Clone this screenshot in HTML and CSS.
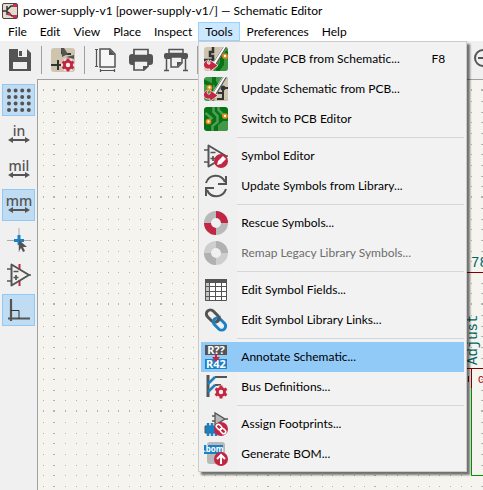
FILE: index.html
```html
<!DOCTYPE html>
<html lang="en">
<head>
<meta charset="utf-8">
<title>power-supply-v1 — Schematic Editor</title>
<link rel="stylesheet" href="styles.css">
</head>
<body>
<svg class="defs" aria-hidden="true">
  <defs>
    <clipPath id="tile"><rect width="24" height="24" rx="3"/></clipPath>
    <symbol id="redarrow" viewBox="0 0 24 24">
      <path d="M22 -2L10 17" stroke="#fff" stroke-width="4"/>
      <path d="M23 -1L12 17" stroke="#545454" stroke-width="1.200"/>
      <path d="M20 -1L9 16" stroke="#888" stroke-width="1"/>
      <path d="M5 13C-3 14 -2 23 6 22v2.500l8-6-8-5.500v4c-3 1-4-2-1-4z" fill="#c22643" stroke="#fff" stroke-width=".7"/>
    </symbol>
    <symbol id="redgear" viewBox="0 0 14 14">
      <circle cx="7" cy="7" r="7" fill="#f3e9e4" opacity=".8"/>
      <g stroke="#c22643" stroke-width="3"><path d="M7 .5v13M1.400 3.800l11.200 6.400M1.400 10.200l11.200-6.400"/></g>
      <circle cx="7" cy="7" r="3.600" fill="#f0eeee" stroke="#c22643" stroke-width="2.800"/>
    </symbol>
    <symbol id="opamp" viewBox="0 0 24 24">
      <path d="M4.500 1.500v21L22 12z" fill="none" stroke="#545454" stroke-width="2" stroke-linejoin="round"/>
      <path d="M0 6h4M0 18h4M22 12h2M6.500 8.500h5M6.500 14.500h5M9 12v5" stroke="#545454" stroke-width="1.700" fill="none"/>
    </symbol>
    <symbol id="ring" viewBox="0 0 24 24">
      <circle cx="12" cy="12" r="8.500" fill="none" stroke="#b9b9b9" stroke-width="7"/>
      <path d="M12 3.500a8.500 8.500 0 0 1 8.500 8.500M12 20.500A8.500 8.500 0 0 1 3.500 12" fill="none" stroke="currentColor" stroke-width="7"/>
    </symbol>
    <symbol id="span" viewBox="0 0 24 6">
      <path d="M5 3h14" stroke="#545454" stroke-width="2"/>
      <path d="M1 3l5-3v6zM23 3l-5-3v6z" fill="#545454"/>
    </symbol>
  </defs>
</svg>

<header class="titlebar">
  <svg class="logo" viewBox="0 0 16 16"><rect x=".5" y=".5" width="15" height="15" rx="1.500" fill="#e4dccb" stroke="#4a4545"/><path d="M5 3v9M0 8h5M5 7l4-4h3M6 9l4 4h4" fill="none" stroke="#333" stroke-width="1.500"/><path d="M9 13l-1-4-3 3zM11 1h4v3h-4zM11 12h4v3h-4z" fill="#d42a55"/></svg>
  <h1>power-supply-v1 [power-supply-v1/] — Schematic Editor</h1>
</header>

<nav class="menubar" aria-label="Main menu">
  <button>File</button>
  <button>Edit</button>
  <button>View</button>
  <button>Place</button>
  <button>Inspect</button>
  <div class="dropdown">
    <button class="open" aria-expanded="true">Tools</button>
    <div class="menu" role="menu">
      <button role="menuitem"><svg viewBox="0 0 24 24"><g clip-path="url(#tile)"><rect width="24" height="24" fill="#cfc5ae"/><path d="M20 0h4v24H9z" fill="#3c9640"/><path d="M9 0v5H6v4h3v4M0 13h11" stroke="#333" stroke-width="2.500" fill="none"/><path d="M24 5l-6 6v6l-5 7" stroke="#087316" stroke-width="4" fill="none"/><use href="#redarrow" width="24" height="24"/><circle cx="21" cy="9" r="2" fill="#fff" stroke="#ee8b18" stroke-width="1.700"/></g></svg><span>Update PCB from Schematic...</span><kbd>F8</kbd></button>
      <button role="menuitem"><svg viewBox="0 0 24 24"><g clip-path="url(#tile)"><rect width="24" height="24" fill="#43984a"/><path d="M-1 4l8 4v8M10 0v5l4 5" stroke="#087316" stroke-width="4" fill="none"/><path d="M22 0h2v24H10z" fill="#cfc5ae"/><path d="M24 11h-5v11h-6M19 16h-5" stroke="#333" stroke-width="2" fill="none"/><circle cx="19" cy="11" r="2.500" fill="#333"/><use href="#redarrow" width="24" height="24"/><circle cx="5.500" cy="10.500" r="2" fill="#fff" stroke="#ee8b18" stroke-width="1.700"/></g></svg><span>Update Schematic from PCB...</span></button>
      <button role="menuitem"><svg viewBox="0 0 24 24"><g clip-path="url(#tile)"><rect width="24" height="24" fill="#087316"/><path d="M14 18l5-4h5v10H14z" fill="#43984a"/><path d="M9.500 0v5l4 4v6l-5 4v5M14.500 0v3l5 5M4.500 14l3-3-6-5" fill="none" stroke="#4da054" stroke-width="2.500"/><circle cx="4.500" cy="14.500" r="2" fill="#fff" stroke="#ee8b18" stroke-width="1.700"/><circle cx="21" cy="9" r="2" fill="#fff" stroke="#ee8b18" stroke-width="1.700"/></g></svg><span>Switch to PCB Editor</span></button>
      <hr>
      <button role="menuitem"><svg viewBox="0 0 24 24"><use href="#opamp" width="24" height="24"/><circle cx="17" cy="17" r="7" fill="#c22643"/><path d="M13 21l1-4 5-5 3 3-5 5z" fill="#fff"/></svg><span>Symbol Editor</span></button>
      <button role="menuitem"><svg viewBox="0 0 24 24"><path d="M2 9C5 0 17-1 21 8M22 15C19 24 7 25 3 16" fill="none" stroke="#545454" stroke-width="2"/><path d="M22 2v8h-8M2 22v-8h8" fill="none" stroke="#545454" stroke-width="2"/></svg><span>Update Symbols from Library...</span></button>
      <hr>
      <button role="menuitem"><svg class="rescue" viewBox="0 0 24 24"><use href="#ring" width="24" height="24"/></svg><span>Rescue Symbols...</span></button>
      <button role="menuitem" disabled><svg class="remap" viewBox="0 0 24 24"><use href="#ring" width="24" height="24"/></svg><span>Remap Legacy Library Symbols...</span></button>
      <hr>
      <button role="menuitem"><svg viewBox="0 0 24 24"><path d="M1 1h22v22H1z" fill="#fff"/><path d="M1 1h22v4H1z" fill="#545454"/><path d="M1 5h4v18H1z" fill="#c4c4c4"/><path d="M1.500 1.500h21v21h-21zM1 8.500h22M1 13.500h22M1 18.500h22M5.500 4v19M11.500 4v19M17.500 4v19" fill="none" stroke="#545454"/></svg><span>Edit Symbol Fields...</span></button>
      <button role="menuitem"><svg viewBox="0 0 24 24"><g fill="none" stroke-width="3"><rect x="1.500" y="4" width="14" height="8" rx="4" transform="rotate(45 8.500 8)" stroke="#545454"/><rect x="8.500" y="12" width="14" height="8" rx="4" transform="rotate(45 15.500 16)" stroke="#1a81c4"/><path d="M15 8c1 3 0 5-3 6" stroke="#545454"/></g></svg><span>Edit Symbol Library Links...</span></button>
      <hr>
      <button role="menuitem" class="active"><svg viewBox="0 0 24 24"><path d="M1 0h22v10H1z" fill="#545454"/><path d="M1 14h22v10H1z" fill="#1a81c4"/><g class="tag"><text x="12" y="9">R??</text><text x="12" y="23">R42</text></g><path d="M12 17l-4-5h3V9h2v3h3z" fill="#c22643"/></svg><span>Annotate Schematic...</span></button>
      <button role="menuitem"><svg viewBox="0 0 24 24"><path d="M4 0v22" stroke="#545454" stroke-width="3"/><path d="M11 2h12M11 10h6" stroke="#545454" stroke-width="2"/><path d="M4 9l7-7M4 17l7-7" stroke="#1a81c4" stroke-width="2.500"/><use href="#redgear" x="10" y="10" width="14" height="14"/></svg><span>Bus Definitions...</span></button>
      <hr>
      <button role="menuitem"><svg viewBox="0 0 24 24"><path d="M11 1v12l10-6zM8 4h3M8 9h3M21 7h3" fill="#b9b9b9" stroke="#545454" stroke-width="1.300"/><path d="M1 14h12v7H1z" fill="#1a81c4" stroke="#545454"/><path d="M4 11v4M8 11v4M4 20v4M8 20v4M12 20v4" stroke="#1a81c4" stroke-width="2.500"/><circle cx="17" cy="17" r="7" fill="#c22643"/><g fill="none" stroke="#fff" stroke-width="1.500"><rect x="12" y="13" width="6" height="4" rx="2" transform="rotate(45 15 15)"/><rect x="16" y="17" width="6" height="4" rx="2" transform="rotate(45 19 19)"/></g></svg><span>Assign Footprints...</span></button>
      <button role="menuitem"><svg viewBox="0 0 24 24"><rect x="3" y="0" width="18" height="22" rx="3" fill="#b9b9b9"/><path d="M0 3h19v9H0z" fill="#1a81c4"/><text class="bom" x="9.500" y="10">.bom</text><circle cx="17" cy="17" r="7" fill="#c22643"/><path d="M17 22v-8M13 17l4-4 4 4" fill="none" stroke="#fff" stroke-width="2"/></svg><span>Generate BOM...</span></button>
    </div>
  </div>
  <button>Preferences</button>
  <button>Help</button>
</nav>

<div class="toolbar" role="toolbar" aria-label="Main toolbar">
  <button aria-label="Save"><svg viewBox="0 0 24 24"><path d="M1 1h18l4 4v18H1z" fill="#545454"/><path d="M10 1h9v8h-9z" fill="#f0f0f0"/><path d="M11 3h3v5h-3z" fill="#545454"/><path d="M5 14h14v7H5z" fill="#f0f0f0"/></svg></button>
  <i></i>
  <button aria-label="Schematic setup"><svg viewBox="0 0 24 24"><g clip-path="url(#tile)"><rect width="24" height="24" fill="#cfc5ae"/><path d="M11 0v6M0 17h10M7 12v10M11 6h9" stroke="#333" stroke-width="2"/><path d="M10 0h3l4 6-6 3zM15 9l8-2v4z" fill="#545454"/></g><use href="#redgear" x="10" y="10" width="14" height="14"/></svg></button>
  <i></i>
  <button aria-label="Page settings"><svg viewBox="0 0 24 24"><path d="M6 1h10l5 5v13H6z" fill="#f6f6f6" stroke="#545454" stroke-width="1.500"/><path d="M15 1v6h6z" fill="#545454"/><path d="M2.500 1v18M1 1.500h3M1 18.500h3M6 22.500h15M6.500 21v3M20.500 21v3" stroke="#545454" stroke-width="1.200"/></svg></button>
  <button aria-label="Print"><svg viewBox="0 0 24 24"><rect y="6" width="24" height="11" rx="3" fill="#545454"/><path d="M5 1.500h14v6H5zM5 13h14v5l-4 4H5z" fill="#f0f0f0" stroke="#545454" stroke-width="1.700"/><path d="M14 23v-5h6z" fill="#545454"/></svg></button>
  <button aria-label="Plot"><svg viewBox="0 0 24 24"><rect y="5" width="24" height="6" rx="2" fill="#545454"/><path d="M5 1.500h14v4H5zM7 9h11v6l-4 4H7z" fill="#f0f0f0" stroke="#545454" stroke-width="1.500"/><path d="M13 19v-5h5z" fill="#545454"/><path d="M2.500 10v12M21.500 10v12M0 22.500h5M19 22.500h5" stroke="#545454" stroke-width="1.500"/></svg></button>
  <i></i>
  <button class="zoom" aria-label="Zoom out"><svg viewBox="0 0 24 24"><circle cx="10" cy="10" r="8" fill="none" stroke="#545454" stroke-width="2"/><path d="M5 10h10M16 16l6 6" stroke="#545454" stroke-width="2"/></svg></button>
</div>

<main class="workspace">
  <div class="sidebar" role="toolbar" aria-label="Options">
    <button class="on" aria-label="Grid"><svg viewBox="0 0 24 24"><path d="M2 2.500h20M2 9h20M2 15.500h20M2 22h20" class="dots"/></svg></button>
    <button aria-label="Inches"><svg viewBox="0 0 24 24"><text class="unit" x="12" y="13">in</text><use href="#span" y="14" width="24" height="6"/></svg></button>
    <button aria-label="Mils"><svg viewBox="0 0 24 24"><text class="unit" x="12" y="13">mil</text><use href="#span" y="14" width="24" height="6"/></svg></button>
    <button class="on" aria-label="Millimeters"><svg viewBox="0 0 24 24"><text class="unit" x="12" y="13">mm</text><use href="#span" y="14" width="24" height="6"/></svg></button>
    <button aria-label="Full cursor"><svg viewBox="0 0 24 24"><path d="M12 0v24M0 12.500h24" stroke="#aaa"/><path d="M12 7v10M7 12.500h10" stroke="#1a81c4" stroke-width="3"/><path d="M12 12l8 7h-4l2 4-2 1-2-4-2 3z" fill="#545454"/></svg></button>
    <button aria-label="Hidden pins"><svg viewBox="0 0 24 24"><path d="M12.500 1v6M12.500 17v6" stroke="#c22643" stroke-width="2"/><use href="#opamp" width="24" height="24"/></svg></button>
    <button class="on" aria-label="Orthogonal lines"><svg viewBox="0 0 24 24"><path d="M4 1v22M1 20.500h22" stroke="#545454" stroke-width="2.200"/><path d="M4 12.500h8v8" fill="none" stroke="#333"/></svg></button>
  </div>
  <div class="canvas">
    <svg role="img" aria-label="Schematic sheet">
      <defs>
        <pattern id="grid" x="15" y="9" width="107" height="107" patternUnits="userSpaceOnUse">
          <g fill="none" stroke="#b2b2ae" shape-rendering="crispEdges">
            <path id="row" d="M0 12.500h2m10 0h1m10 0h1m9 0h1m10 0h1m10 0h1m9 0h1m10 0h1m10 0h1m9 0h1"/>
            <use href="#row" y="-12"/><use href="#row" y="-11"/><use href="#row" y="11"/><use href="#row" y="21"/><use href="#row" y="32"/><use href="#row" y="43"/><use href="#row" y="53"/><use href="#row" y="64"/><use href="#row" y="75"/><use href="#row" y="85"/>
          </g>
        </pattern>
      </defs>
      <rect width="100%" height="100%" fill="url(#grid)"/>
      <path class="part" d="M400 192.500h200M400 288.500h200M433.500 288v20M430.500 296v6"/>
      <path class="wire" d="M433.500 308v87.500H600"/>
      <text class="label" x="433" y="187">78</text>
      <text class="label" transform="translate(439 285) rotate(-90)">Adjust</text>
      <text class="pin" x="440" y="303">C</text>
    </svg>
  </div>
</main>
</body>
</html>
```
FILE: styles.css
```css
* { box-sizing: border-box; }
body {
  margin: 0;
  min-height: 100vh;
  display: flex;
  flex-direction: column;
  background: #f0f0f0;
  color: #000;
  font: 12px/18px Lato, "Open Sans", sans-serif;
}
button {
  margin: 0;
  padding: 0;
  border: 0;
  background: none;
  color: inherit;
  font: inherit;
}
svg { display: block; flex: none; overflow: visible; }
.defs { position: absolute; width: 0; height: 0; }

.titlebar {
  display: flex;
  align-items: center;
  gap: 5px;
  height: 22px;
  padding: 0 2px;
  background: #fff;
}
.logo { width: 16px; height: 16px; }
h1 { margin: 0; font: inherit; white-space: nowrap; }

.menubar { display: flex; height: 19px; padding-left: 1px; background: #fff; }
.menubar > button, .open { height: 19px; padding: 0 6px; border: 1px solid transparent; line-height: 17px; }
.menubar > button { margin-right: -1px; }
.menubar .open { background: #cce8ff; border-color: #99d1ff; }
.dropdown { position: relative; }
.menu {
  position: absolute;
  z-index: 1;
  top: 100%;
  left: 0;
  width: 269px;
  padding: 2px;
  border: 1px solid #ccc;
  background: linear-gradient(90deg, #f0f0f0 38px, #f2f2f2 38px);
  box-shadow: 3px 3px 2px #0008;
}
.menu button {
  display: flex;
  align-items: center;
  gap: 13px;
  width: 100%;
  height: 30px;
  padding: 0 19px 0 3px;
  text-align: left;
  white-space: nowrap;
}
.menu svg { width: 24px; height: 24px; }
.menu span { flex: 1; }
.menu kbd { font: inherit; }
.menu hr { height: 1px; margin: 3px 0 3px 36px; border: 0; background: #d7d7d7; }
.menu .active { background: #91c9f7; }
.menu button:disabled { color: #6d6d6d; }
.rescue { color: #c22643; }
.remap { color: #888; opacity: .6; }
.tag text { font: bold 11px "Noto Sans", sans-serif; fill: #fff; text-anchor: middle; }
.bom { font: bold 8px "Noto Sans", sans-serif; fill: #fff; text-anchor: middle; }

.toolbar { display: flex; align-items: center; gap: 11px; height: 38px; padding-left: 8px; overflow: hidden; }
.toolbar svg, .sidebar svg { width: 24px; height: 24px; }
.toolbar i { flex: none; width: 1px; height: 28px; margin: 0 -2px; background: #a0a0a0; }
.toolbar .zoom { margin-left: 266px; }

.workspace { flex: 1; display: flex; }
.sidebar { display: flex; flex-direction: column; gap: 3px; width: 37px; padding: 5px 2px; }
.sidebar button { display: grid; place-items: center; height: 32px; border: 1px solid transparent; }
.sidebar .on { background: #c0dcf3; border-color: #90c8f6; }
.dots { stroke: #545454; stroke-width: 4; stroke-linecap: round; stroke-dasharray: 0 6.6; }
.unit { font: 500 14px "Noto Sans", sans-serif; fill: #545454; text-anchor: middle; }

.canvas {
  position: relative;
  flex: 1;
  border: solid #a0a0a0;
  border-width: 1px 0 0 1px;
  background: #f5f4ef;
  overflow: hidden;
}
.canvas svg { position: absolute; inset: 0; width: 100%; height: 100%; }
.part { fill: none; stroke: #840000; }
.wire { fill: none; stroke: #009600; }
.label { font: 14px "Liberation Mono", monospace; fill: #006464; }
.pin { font: 10px "Liberation Mono", monospace; fill: #a90000; }
```
